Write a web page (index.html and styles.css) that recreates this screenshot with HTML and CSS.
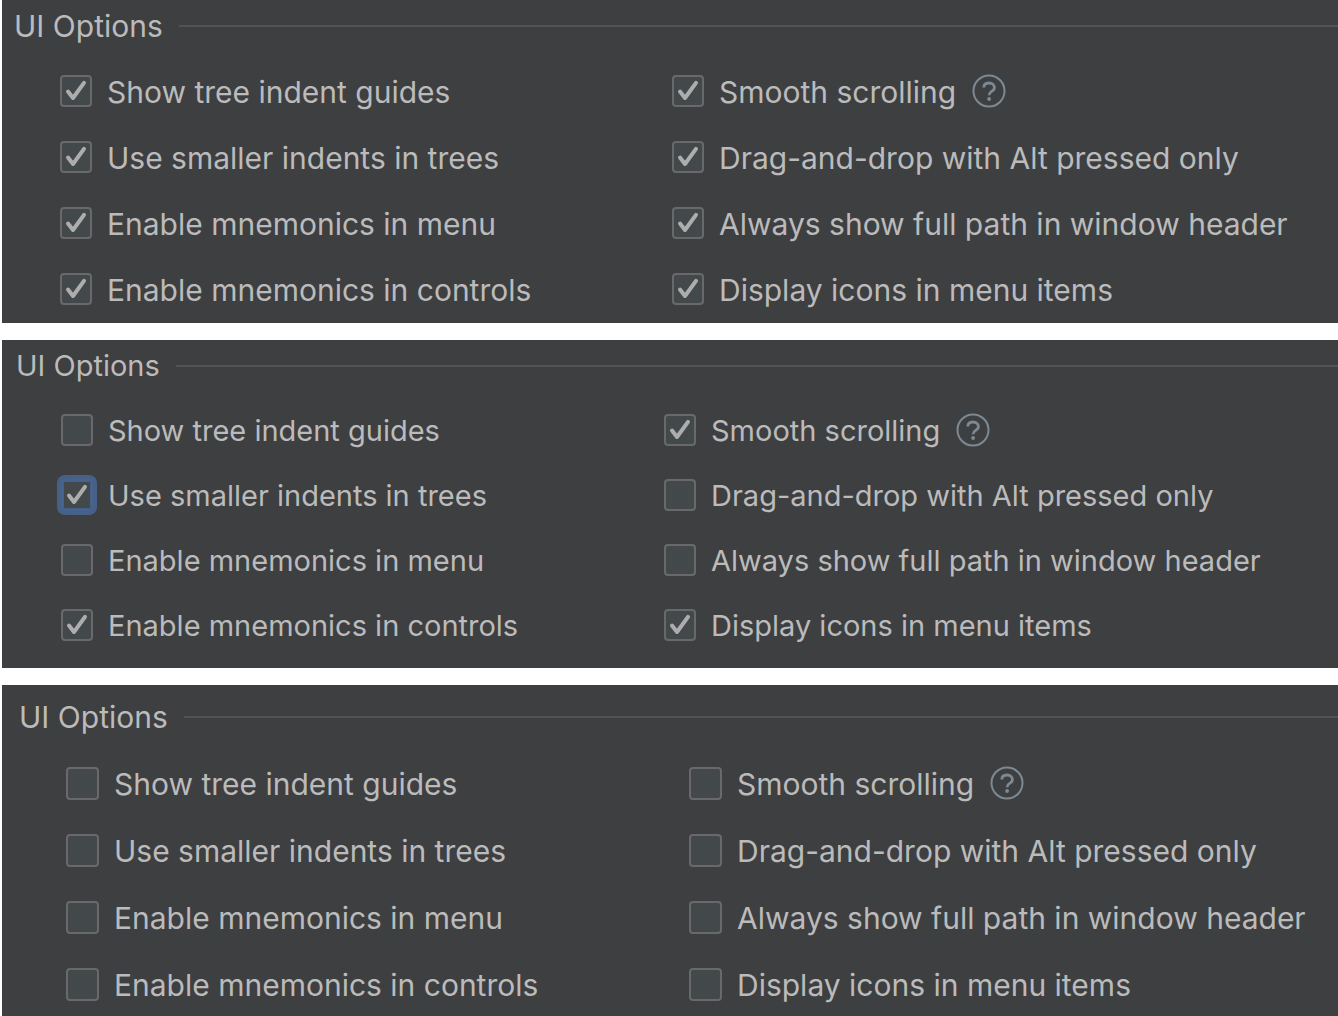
FILE: index.html
```html
<!DOCTYPE html>
<html lang="en">
<head>
<meta charset="utf-8">
<title>UI Options</title>
<link rel="stylesheet" href="styles.css">
</head>
<body>
<svg class="symbols" aria-hidden="true">
  <symbol id="check" viewBox="0 0 32 32"><path d="M8 16.5 L13 23 L24 7.8" fill="none" stroke="currentColor" stroke-width="4" stroke-linecap="round" stroke-linejoin="round"/></symbol>
  <symbol id="help" viewBox="0 0 34 34"><circle cx="17" cy="17" r="15.5" fill="none" stroke="currentColor" stroke-width="2"/><path d="M11.8 13.6 C11.8 10.6 14 9 17 9 C20.2 9 22.4 10.8 22.4 13.4 C22.4 15.4 21.3 16.4 19.6 17.4 C17.8 18.5 17.1 19.3 17.1 21.2" fill="none" stroke="currentColor" stroke-width="2.8"/><circle cx="17.1" cy="25" r="1.9" fill="currentColor"/></symbol>
</svg>
<main class="page">
  <section class="panel panel-all" aria-labelledby="title-all">
    <h2 class="title" id="title-all">UI Options</h2>
    <div class="options">
      <label class="option"><span class="box"><input type="checkbox" checked><svg><use href="#check"/></svg></span>Show tree indent guides</label>
      <div class="pair"><label class="option"><span class="box"><input type="checkbox" checked><svg><use href="#check"/></svg></span>Smooth scrolling</label><button class="help" type="button" aria-label="Help"><svg><use href="#help"/></svg></button></div>
      <label class="option"><span class="box"><input type="checkbox" checked><svg><use href="#check"/></svg></span>Use smaller indents in trees</label>
      <label class="option"><span class="box"><input type="checkbox" checked><svg><use href="#check"/></svg></span>Drag-and-drop with Alt pressed only</label>
      <label class="option"><span class="box"><input type="checkbox" checked><svg><use href="#check"/></svg></span>Enable mnemonics in menu</label>
      <label class="option"><span class="box"><input type="checkbox" checked><svg><use href="#check"/></svg></span>Always show full path in window header</label>
      <label class="option"><span class="box"><input type="checkbox" checked><svg><use href="#check"/></svg></span>Enable mnemonics in controls</label>
      <label class="option"><span class="box"><input type="checkbox" checked><svg><use href="#check"/></svg></span>Display icons in menu items</label>
    </div>
  </section>
  <section class="panel panel-some" aria-labelledby="title-some">
    <h2 class="title" id="title-some">UI Options</h2>
    <div class="options">
      <label class="option"><span class="box"><input type="checkbox"><svg><use href="#check"/></svg></span>Show tree indent guides</label>
      <div class="pair"><label class="option"><span class="box"><input type="checkbox" checked><svg><use href="#check"/></svg></span>Smooth scrolling</label><button class="help" type="button" aria-label="Help"><svg><use href="#help"/></svg></button></div>
      <label class="option"><span class="box"><input class="focused" type="checkbox" checked><svg><use href="#check"/></svg></span>Use smaller indents in trees</label>
      <label class="option"><span class="box"><input type="checkbox"><svg><use href="#check"/></svg></span>Drag-and-drop with Alt pressed only</label>
      <label class="option"><span class="box"><input type="checkbox"><svg><use href="#check"/></svg></span>Enable mnemonics in menu</label>
      <label class="option"><span class="box"><input type="checkbox"><svg><use href="#check"/></svg></span>Always show full path in window header</label>
      <label class="option"><span class="box"><input type="checkbox" checked><svg><use href="#check"/></svg></span>Enable mnemonics in controls</label>
      <label class="option"><span class="box"><input type="checkbox" checked><svg><use href="#check"/></svg></span>Display icons in menu items</label>
    </div>
  </section>
  <section class="panel panel-none" aria-labelledby="title-none">
    <h2 class="title" id="title-none">UI Options</h2>
    <div class="options">
      <label class="option"><span class="box"><input type="checkbox"><svg><use href="#check"/></svg></span>Show tree indent guides</label>
      <div class="pair"><label class="option"><span class="box"><input type="checkbox"><svg><use href="#check"/></svg></span>Smooth scrolling</label><button class="help" type="button" aria-label="Help"><svg><use href="#help"/></svg></button></div>
      <label class="option"><span class="box"><input type="checkbox"><svg><use href="#check"/></svg></span>Use smaller indents in trees</label>
      <label class="option"><span class="box"><input type="checkbox"><svg><use href="#check"/></svg></span>Drag-and-drop with Alt pressed only</label>
      <label class="option"><span class="box"><input type="checkbox"><svg><use href="#check"/></svg></span>Enable mnemonics in menu</label>
      <label class="option"><span class="box"><input type="checkbox"><svg><use href="#check"/></svg></span>Always show full path in window header</label>
      <label class="option"><span class="box"><input type="checkbox"><svg><use href="#check"/></svg></span>Enable mnemonics in controls</label>
      <label class="option"><span class="box"><input type="checkbox"><svg><use href="#check"/></svg></span>Display icons in menu items</label>
    </div>
  </section>
</main>
</body>
</html>
```
FILE: styles.css
```css
* { box-sizing: border-box; }

body {
  margin: 0;
  background: #fff;
  color: #bbb;
  font-family: Inter, "Liberation Sans", sans-serif;
  font-size: 30px;
  line-height: 36px;
}

.symbols {
  position: absolute;
  width: 0;
  height: 0;
}

.page {
  display: flex;
  flex-direction: column;
  gap: 17px;
  padding-left: 2px;
}

.panel {
  background: #3e3f41;
}

.title {
  display: flex;
  align-items: center;
  gap: 16px;
  height: 52px;
  margin: 0;
  font-size: inherit;
  font-weight: 400;
}

.title::after {
  content: "";
  flex: 1;
  height: 2px;
  background: #515354;
}

.options {
  display: grid;
  white-space: nowrap;
}

.option {
  display: flex;
  align-items: center;
  gap: 15px;
}

.pair {
  display: flex;
  align-items: center;
  gap: 16px;
}

.box {
  display: grid;
  flex: none;
  width: 32px;
  height: 32px;
  margin-bottom: 2px;
}

.box input,
.box svg {
  grid-area: 1 / 1;
  width: 100%;
  height: 100%;
}

.box input {
  appearance: none;
  margin: 0;
  border: 2px solid #69696a;
  border-radius: 4px;
  background: #43494a;
}

.box svg {
  visibility: hidden;
  color: #adadad;
  pointer-events: none;
}

.box input:checked + svg { visibility: visible; }

.box .focused,
.box input:focus-visible {
  outline: none;
  border-color: #476491;
  box-shadow: 0 0 0 4px #466087, inset 0 0 0 1px #466087;
}

.help {
  width: 34px;
  height: 34px;
  margin: 0 0 2px;
  padding: 0;
  border: 0;
  background: none;
  color: #7d8a93;
}

.help svg {
  display: block;
  width: 100%;
  height: 100%;
}

.panel-all { padding: 0 0 15px 12px; }
.panel-all .options {
  grid-template-columns: minmax(0, 612fr) minmax(0, 666fr);
  row-gap: 30px;
  padding: 22px 0 0 46px;
}

.panel-some {
  padding: 0 0 24px 14px;
  font-size: 29px;
}
.panel-some .options {
  grid-template-columns: minmax(0, 603fr) minmax(0, 674fr);
  row-gap: 29px;
  padding: 21px 0 0 45px;
}

.panel-none { padding: 6px 0 13px 17px; }
.panel-none .options {
  grid-template-columns: minmax(0, 623fr) minmax(0, 649fr);
  row-gap: 31px;
  padding: 23px 0 0 47px;
}
.panel-none .box {
  width: 33px;
  height: 33px;
}
```
